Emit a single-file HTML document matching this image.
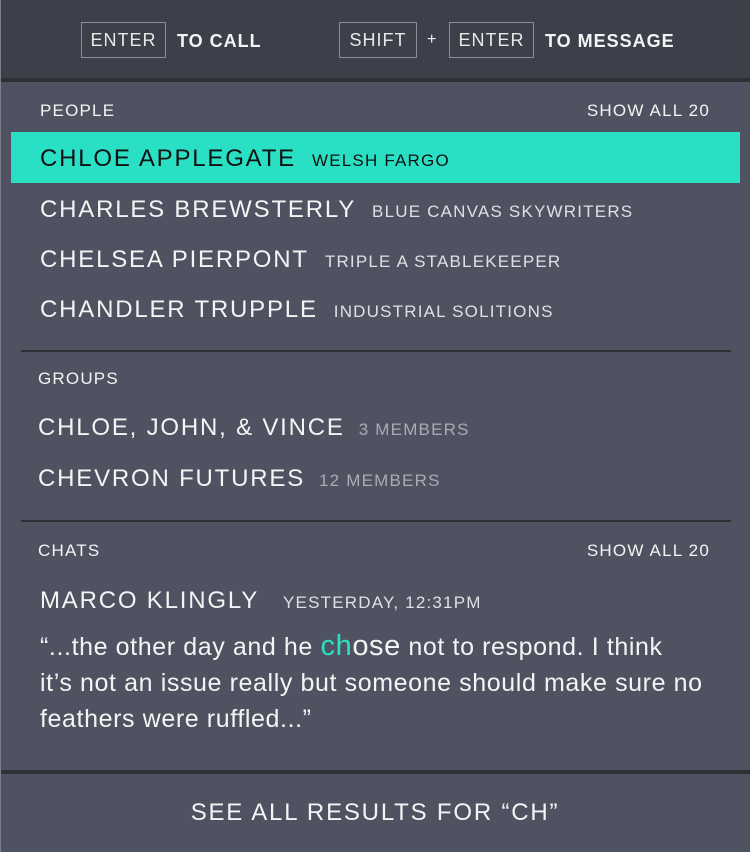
<!DOCTYPE html>
<html><head><style>
*{margin:0;padding:0;box-sizing:border-box}
body{width:750px;height:852px;background:#4f5361;font-family:"Liberation Sans",sans-serif;color:#f4f4f4;position:relative;overflow:hidden}
.abs{position:absolute;white-space:nowrap}
.hdr{position:absolute;left:0;top:0;width:750px;height:78px;background:#3d404a}
.bar{position:absolute;left:0;width:750px;height:4px;background:#2e3036}
.key{position:absolute;top:22px;height:36px;border:1px solid #8a8d95;font-size:18px;line-height:34px;text-align:center;letter-spacing:1px;color:#e8e8e8}
.hb{font-weight:bold;font-size:18px;letter-spacing:1px;top:31px}
.lbl{font-size:17px;letter-spacing:1.2px}
.name{font-size:24px;letter-spacing:1.8px}
.sub{font-size:17px;letter-spacing:1.2px;color:#dfe0e4;margin-left:16px}
.mem{font-size:17px;letter-spacing:1.2px;color:#a9acb5;margin-left:14px}
.div{position:absolute;left:21px;width:710px;height:2px;background:#2e3036}
</style></head><body>
<div class="hdr"></div>
<div class="bar" style="top:78px"></div>
<div class="key" style="left:81px;width:85px">ENTER</div>
<div class="abs hb" style="left:177px">TO CALL</div>
<div class="key" style="left:339px;width:78px">SHIFT</div>
<div class="abs" style="left:427px;top:31px;font-size:16px">+</div>
<div class="key" style="left:449px;width:85px">ENTER</div>
<div class="abs hb" style="left:545px">TO MESSAGE</div>

<div class="abs lbl" style="left:40px;top:101px">PEOPLE</div>
<div class="abs lbl" style="right:40px;top:101px">SHOW ALL 20</div>
<div class="abs" style="left:11px;top:132px;width:729px;height:51px;background:#2ae0c4"></div>
<div class="abs name" style="left:40px;top:145px;color:#111">CHLOE APPLEGATE<span class="sub" style="color:#111">WELSH FARGO</span></div>
<div class="abs name" style="left:40px;top:196px">CHARLES BREWSTERLY<span class="sub">BLUE CANVAS SKYWRITERS</span></div>
<div class="abs name" style="left:40px;top:246px">CHELSEA PIERPONT<span class="sub">TRIPLE A STABLEKEEPER</span></div>
<div class="abs name" style="left:40px;top:296px">CHANDLER TRUPPLE<span class="sub">INDUSTRIAL SOLITIONS</span></div>
<div class="div" style="top:350px"></div>

<div class="abs lbl" style="left:38px;top:369px">GROUPS</div>
<div class="abs name" style="left:38px;top:414px">CHLOE, JOHN, &amp; VINCE<span class="mem">3 MEMBERS</span></div>
<div class="abs name" style="left:38px;top:465px">CHEVRON FUTURES<span class="mem">12 MEMBERS</span></div>
<div class="div" style="top:520px"></div>

<div class="abs lbl" style="left:38px;top:541px">CHATS</div>
<div class="abs lbl" style="right:40px;top:541px">SHOW ALL 20</div>
<div class="abs name" style="left:40px;top:587px">MARCO KLINGLY<span class="sub" style="margin-left:24px">YESTERDAY, 12:31PM</span></div>
<div class="abs" style="left:40px;top:628px;font-size:25px;line-height:36px;letter-spacing:0.6px">“...the other day and he <span style="color:#2ae0c4;font-size:29px">ch</span><span style="font-size:29px">ose</span> not to respond. I think<br>it’s not an issue really but someone should make sure no<br>feathers were ruffled...”</div>

<div class="bar" style="top:770px"></div>
<div class="abs" style="left:0;width:750px;top:799px;text-align:center;font-size:24px;letter-spacing:1.8px">SEE ALL RESULTS FOR “CH”</div>
<div class="abs" style="left:0;top:0;width:1px;height:852px;background:#7b7e87"></div>
</body></html>
